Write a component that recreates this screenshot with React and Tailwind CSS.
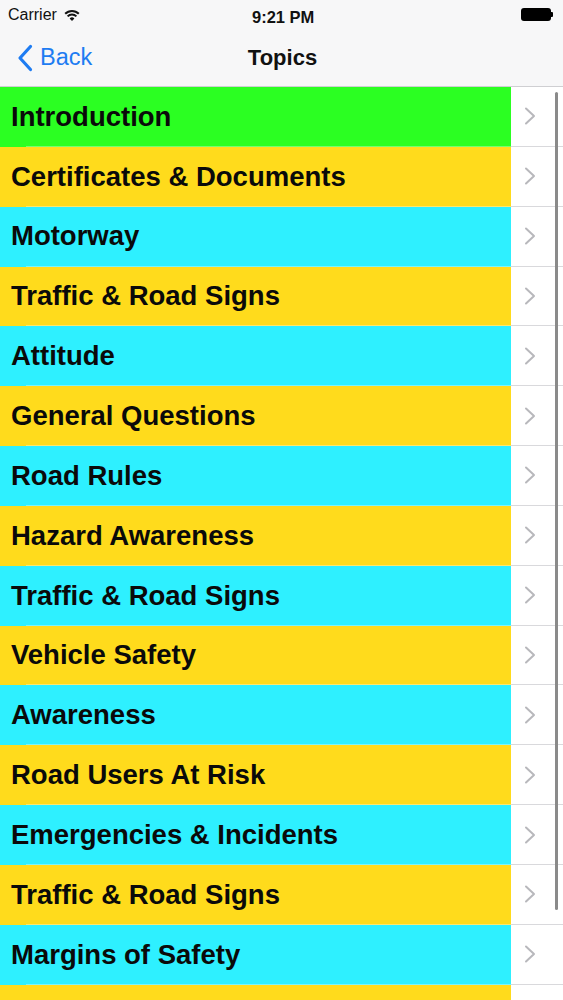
import React from "react";

const rows = [
  { t: "Introduction", c: "bg-[#2bff22]" },
  { t: "Certificates & Documents", c: "bg-[#ffdb1c]" },
  { t: "Motorway", c: "bg-[#2ef0ff]" },
  { t: "Traffic & Road Signs", c: "bg-[#ffdb1c]" },
  { t: "Attitude", c: "bg-[#2ef0ff]" },
  { t: "General Questions", c: "bg-[#ffdb1c]" },
  { t: "Road Rules", c: "bg-[#2ef0ff]" },
  { t: "Hazard Awareness", c: "bg-[#ffdb1c]" },
  { t: "Traffic & Road Signs", c: "bg-[#2ef0ff]" },
  { t: "Vehicle Safety", c: "bg-[#ffdb1c]" },
  { t: "Awareness", c: "bg-[#2ef0ff]" },
  { t: "Road Users At Risk", c: "bg-[#ffdb1c]" },
  { t: "Emergencies & Incidents", c: "bg-[#2ef0ff]" },
  { t: "Traffic & Road Signs", c: "bg-[#ffdb1c]" },
  { t: "Margins of Safety", c: "bg-[#2ef0ff]" },
  { t: "", c: "bg-[#ffdb1c]" },
];

function Chevron() {
  return (
    <svg width="12" height="18" viewBox="0 0 12 18" fill="none">
      <path d="M2 1.5 L10 9 L2 16.5" stroke="#b8b8bc" strokeWidth="2" strokeLinecap="round" strokeLinejoin="round" />
    </svg>
  );
}

export default function App() {
  return (
    <div className="relative w-[563px] h-[1000px] overflow-hidden bg-white" style={{ fontFamily: '"Liberation Sans", Arial, sans-serif' }}>
      {/* Status bar + nav */}
      <div className="bg-[#f7f7f8] border-b border-[#cfcfd2]">
        <div className="h-[28px] flex items-center justify-between px-[8px] relative">
          <div className="flex items-center gap-[7px] pt-[2px]">
            <span className="text-[16px] text-[#111]">Carrier</span>
            <svg width="16" height="13" viewBox="0 0 16 12">
              <path d="M8 11.5 L5.6 8.9 A3.4 3.4 0 0 1 10.4 8.9 Z" fill="#111" />
              <path d="M3.6 6.9 A6.2 6.2 0 0 1 12.4 6.9" stroke="#111" strokeWidth="2" fill="none" />
              <path d="M1.2 4.3 A9.6 9.6 0 0 1 14.8 4.3" stroke="#111" strokeWidth="2" fill="none" />
            </svg>
          </div>
          <span className="absolute left-[252px] top-[5px] text-[16.5px] font-semibold text-[#111]">9:21 PM</span>
          <div className="flex items-center mr-[2px]">
            <div className="w-[30px] h-[13px] rounded-[3px] bg-black"></div>
            <div className="w-[2px] h-[5px] rounded-r-[1px] bg-black"></div>
          </div>
        </div>
        <div className="h-[58px] relative flex items-center">
          <div className="flex items-center pl-[17px] gap-[7px] text-[#1e7cf2] pt-[2px]">
            <svg width="16" height="28" viewBox="0 0 16 28" fill="none">
              <path d="M13.5 2.5 L3 14 L13.5 25.5" stroke="#1e7cf2" strokeWidth="3.2" strokeLinecap="round" strokeLinejoin="round" />
            </svg>
            <span className="text-[23.5px]">Back</span>
          </div>
          <span className="absolute left-0 right-0 text-center text-[22px] font-bold text-[#111] pl-[2px]" style={{ top: "13px" }}>Topics</span>
        </div>
      </div>

      {/* List */}
      <div className="flex flex-col">
        {rows.map((r, i) => (
          <div key={i} className="flex flex-col">
            <div className="flex h-[58.85px]">
              <div className={`w-[511px] ${r.c} flex items-center pl-[11px]`}>
                <span className="text-[27.5px] font-bold text-[#0a0a0a] whitespace-nowrap">{r.t}</span>
              </div>
              <div className="flex-1 flex items-center pl-[13px]">
                <Chevron />
              </div>
            </div>
            <div className="flex h-px">
              <div className={`w-[26px] ${r.c}`}></div>
              <div className={`w-[485px] ${r.c} relative`}>
                <div className="absolute inset-0 bg-white/35"></div>
              </div>
              <div className="flex-1 bg-[#d9d9dc]"></div>
            </div>
          </div>
        ))}
      </div>

      {/* scroll indicator */}
      <div className="absolute left-[555px] top-[92px] w-[3px] h-[818px] rounded-full bg-[#8a8a8a]"></div>
    </div>
  );
}
